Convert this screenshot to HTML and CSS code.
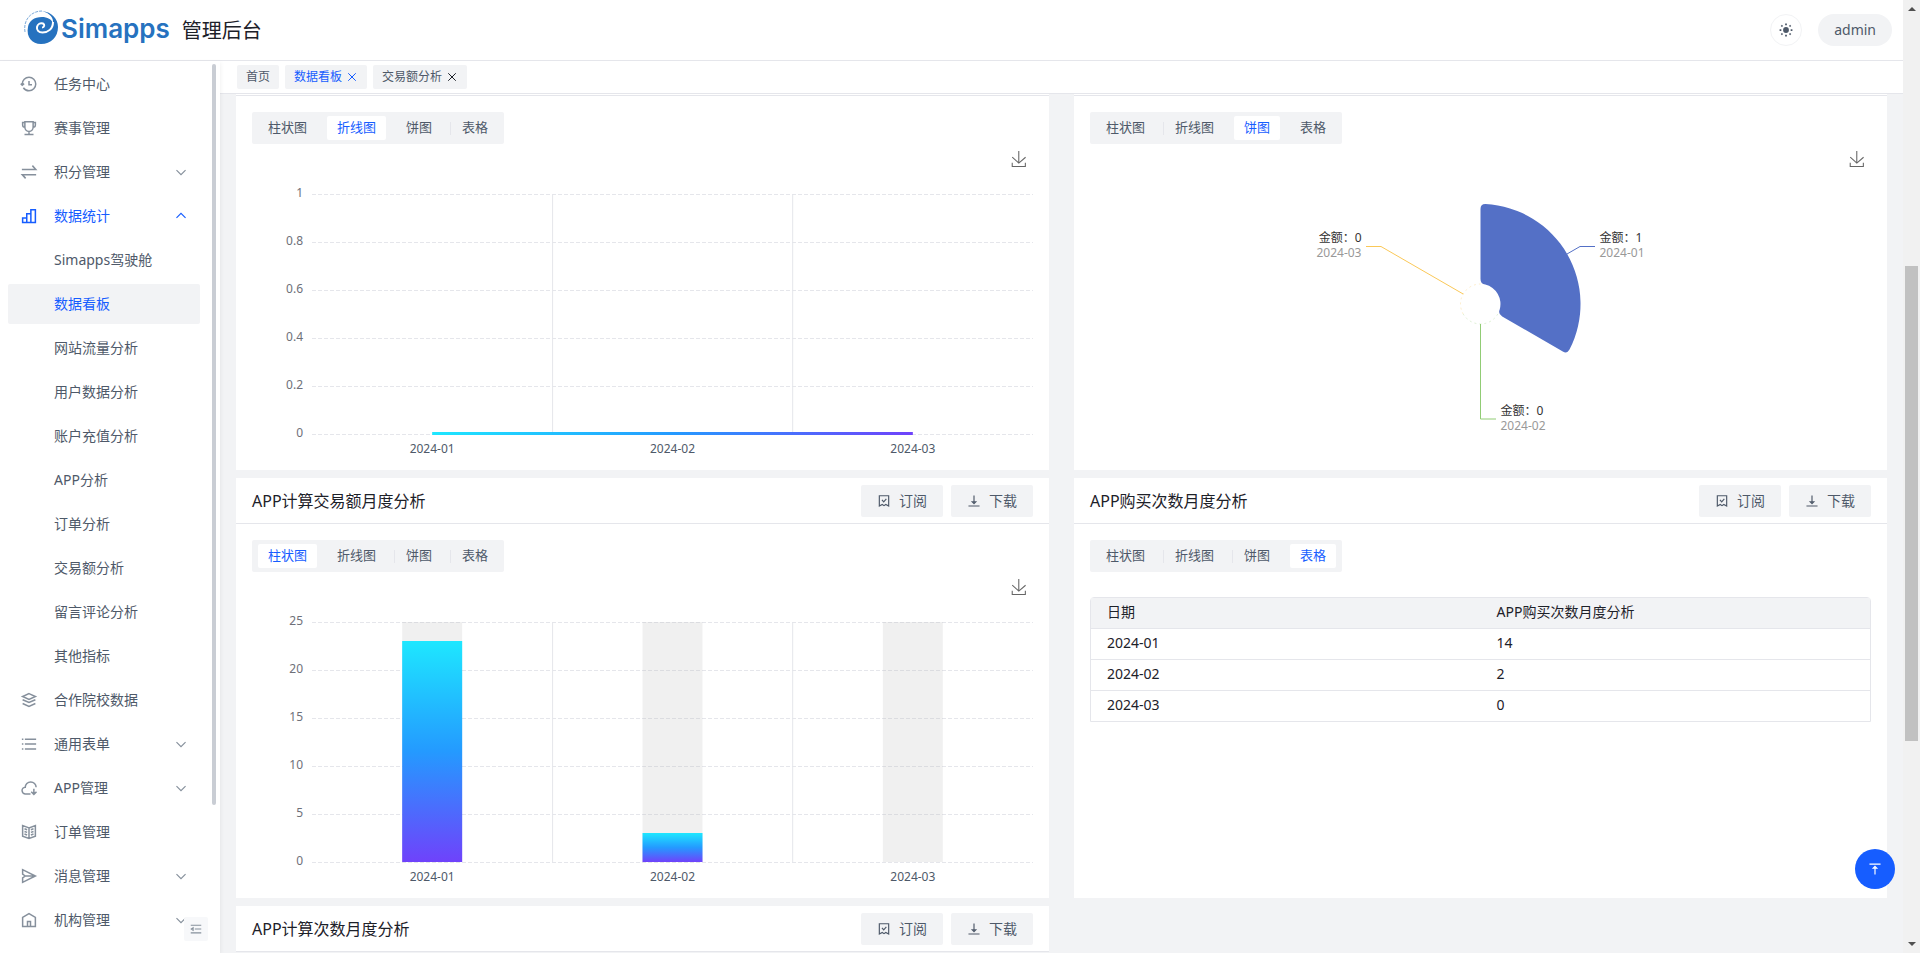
FILE: index.html
```html
<!DOCTYPE html>
<html lang="zh-CN">
<head>
<meta charset="utf-8">
<title>Simapps 管理后台</title>
<link rel="stylesheet" href="styles.css">
</head>
<body>
<svg class="defs" aria-hidden="true">
  <symbol id="i-history" viewBox="0 0 48 48"><path d="M6 24C6 14 14 6 24 6s18 8 18 18-8 18-18 18c-6.300 0-11.800-3.200-15-8M24 16v10h8M2 23l4 4 5-4"/></symbol>
  <symbol id="i-trophy" viewBox="0 0 48 48"><path d="M24 33c-6 0-11-5-11-11V7h22v15c0 6-5 11-11 11Zm0 0v8M13 22c-3.500 0-6-3-6-6V9h6m22 13c3.500 0 6-3 6-6V9h-6M12 41h24"/></symbol>
  <symbol id="i-swap" viewBox="0 0 48 48"><path d="M5 17h37L33 7M43 31H6l9 10"/></symbol>
  <symbol id="i-bars" viewBox="0 0 48 48"><path d="M41 7H29v34h12V7ZM29 18H18v23h11V18ZM18 29H7v12h11V29Z"/></symbol>
  <symbol id="i-layers" viewBox="0 0 48 48"><path d="M24 7 41 14.600 24 22.200 7 14.600 24 7ZM41 23.200 24 30.800 7 23.200M41 33.400 24 41 7 33.400"/></symbol>
  <symbol id="i-list" viewBox="0 0 48 48"><path d="M13 24h30M5 11h4m4 26h30M13 11h30M5 24h4M5 37h4"/></symbol>
  <symbol id="i-cloud" viewBox="0 0 48 48"><path d="M43 22c0-7.700-6.500-14-14.500-14S14 14.300 14 22a9 9 0 0 0 1 18h13m16-6-7 7-7-7m7-8v15"/></symbol>
  <symbol id="i-book" viewBox="0 0 48 48"><path d="M24 13 7 7v28l17 6 17-6V7l-17 6Zm0 0v27.500M29 18l7-2.500M29 25l7-2.500M29 32l7-2.500M19 18l-7-2.500M19 25l-7-2.500M19 32l-7-2.500"/></symbol>
  <symbol id="i-send" viewBox="0 0 48 48"><path d="m14 24-7-5V7l34 17L7 41V29l7-5Zm0 0h25"/></symbol>
  <symbol id="i-home" viewBox="0 0 48 48"><path d="M7 17 24 7l17 10v24H7V17ZM20 41V28h8v13"/></symbol>
  <symbol id="i-down" viewBox="0 0 48 48"><path d="M39.600 17.400 24 33 8.500 17.400"/></symbol>
  <symbol id="i-up" viewBox="0 0 48 48"><path d="M39.600 30.600 24 15 8.500 30.600"/></symbol>
  <symbol id="i-close" viewBox="0 0 48 48"><path d="m9 9 30 30M39 9 9 39"/></symbol>
  <symbol id="i-fold" viewBox="0 0 48 48"><path d="M42 11H6M42 24H20M42 37H6M14 28l-6-4 6-4v8Z"/></symbol>
  <symbol id="i-mark" viewBox="0 0 48 48"><path d="M8 6h32v35l-10-5-6 4-6-4-10 5V6Zm9 14 6 7 9-10"/></symbol>
  <symbol id="i-bottom" viewBox="0 0 48 48"><path d="M5 41h38M24 5v23M24 33l-6-6h12l-6 6Z"/></symbol>
  <symbol id="i-top" viewBox="0 0 48 48"><path d="M43 7H5M24 20v23M24 15l6 6H18l6-6Z"/></symbol>
  <symbol id="i-save" viewBox="0 0 60 60"><path d="M4.700 22.900 29.300 45.500 54.700 23.400M4.600 43.600V58h49.200V43.600M29.200 45.100V0"/></symbol>
  <linearGradient id="g-bar" x1="0" y1="0" x2="0" y2="1"><stop offset="0" stop-color="#1ee7ff"/><stop offset=".5" stop-color="#249aff"/><stop offset="1" stop-color="#6f42fb"/></linearGradient>
  <linearGradient id="g-line"><stop offset="0" stop-color="#1ee7ff"/><stop offset=".5" stop-color="#249aff"/><stop offset="1" stop-color="#6f42fb"/></linearGradient>
</svg>

<div class="page">
  <header class="topbar">
    <div class="brand">
      <svg class="logo" viewBox="0 0 34 34" aria-hidden="true">
        <path class="ring" d="M1 22C-1 10 7 1 18 1"/>
        <path class="wave" d="M4 17C2 27 8 34 17 34c10 0 17-7 17-17C34 9 28 2 18 1c8 2 12 7 11 13-1-5-6-7-11-7C10 7 5 11 4 17Z"/>
        <path class="curl" d="M29 12c0 7-5 10.500-10.500 10.500-4 0-6-2.500-5.500-5.500s3.500-4.500 6-3.500c2 1 1.500 4-1 4"/>
      </svg>
      <span class="brand-name">Simapps</span>
      <h1 class="brand-title">管理后台</h1>
    </div>
    <div class="top-actions">
      <button class="theme" type="button" aria-label="theme">
        <svg viewBox="0 0 48 48"><circle cx="24" cy="24" r="10"/><path d="M21 2h6v6h-6zM21 40h6v6h-6zM2 21h6v6H2zM40 21h6v6h-6zM6 10l4-4 4 4-4 4zM34 10l4-4 4 4-4 4zM6 38l4-4 4 4-4 4zM34 38l4-4 4 4-4 4z"/></svg>
      </button>
      <button class="user" type="button">admin</button>
    </div>
  </header>

  <div class="layout">
    <aside class="side">
      <nav class="menu">
        <a class="item" href="#"><svg class="ic"><use href="#i-history"/></svg><span>任务中心</span></a>
        <a class="item" href="#"><svg class="ic"><use href="#i-trophy"/></svg><span>赛事管理</span></a>
        <a class="item" href="#"><svg class="ic"><use href="#i-swap"/></svg><span>积分管理</span><svg class="arrow"><use href="#i-down"/></svg></a>
        <a class="item open" href="#"><svg class="ic"><use href="#i-bars"/></svg><span>数据统计</span><svg class="arrow"><use href="#i-up"/></svg></a>
        <a class="item sub" href="#">Simapps驾驶舱</a>
        <a class="item sub current" href="#">数据看板</a>
        <a class="item sub" href="#">网站流量分析</a>
        <a class="item sub" href="#">用户数据分析</a>
        <a class="item sub" href="#">账户充值分析</a>
        <a class="item sub" href="#">APP分析</a>
        <a class="item sub" href="#">订单分析</a>
        <a class="item sub" href="#">交易额分析</a>
        <a class="item sub" href="#">留言评论分析</a>
        <a class="item sub" href="#">其他指标</a>
        <a class="item" href="#"><svg class="ic"><use href="#i-layers"/></svg><span>合作院校数据</span></a>
        <a class="item" href="#"><svg class="ic"><use href="#i-list"/></svg><span>通用表单</span><svg class="arrow"><use href="#i-down"/></svg></a>
        <a class="item" href="#"><svg class="ic"><use href="#i-cloud"/></svg><span>APP管理</span><svg class="arrow"><use href="#i-down"/></svg></a>
        <a class="item" href="#"><svg class="ic"><use href="#i-book"/></svg><span>订单管理</span></a>
        <a class="item" href="#"><svg class="ic"><use href="#i-send"/></svg><span>消息管理</span><svg class="arrow"><use href="#i-down"/></svg></a>
        <a class="item" href="#"><svg class="ic"><use href="#i-home"/></svg><span>机构管理</span><svg class="arrow"><use href="#i-down"/></svg></a>
      </nav>
      <div class="side-scroll"></div>
      <button class="fold" type="button" aria-label="fold"><svg><use href="#i-fold"/></svg></button>
    </aside>

    <div class="content">
      <div class="tabs">
        <a class="tab" href="#">首页</a>
        <a class="tab active" href="#">数据看板<svg><use href="#i-close"/></svg></a>
        <a class="tab" href="#">交易额分析<svg class="dark"><use href="#i-close"/></svg></a>
      </div>

      <main class="board">
        <section class="card cut">
          <div class="body">
            <div class="switch">
              <label><input type="radio" name="a">柱状图</label>
              <label><input type="radio" name="a" checked>折线图</label>
              <label><input type="radio" name="a">饼图</label>
              <label><input type="radio" name="a">表格</label>
            </div>
            <div class="tools"><button type="button" class="save" aria-label="save"><svg><use href="#i-save"/></svg></button></div>
            <svg class="chart">
              <g class="grid">
                <line x1="0" x2="100%" y1="0.5" y2="0.5"/><line x1="0" x2="100%" y1="48.5" y2="48.5"/><line x1="0" x2="100%" y1="96.5" y2="96.5"/><line x1="0" x2="100%" y1="144.5" y2="144.5"/><line x1="0" x2="100%" y1="192.5" y2="192.5"/><line x1="0" x2="100%" y1="240.5" y2="240.5"/>
              </g>
              <g class="split"><rect x="33.300%" y="0" width="1" height="240"/><rect x="66.600%" y="0" width="1" height="240"/></g>
              <rect x="16.667%" y="238" width="66.667%" height="3" fill="url(#g-line)"/>
              <g class="y"><text x="-9" y="3">1</text><text x="-9" y="51">0.8</text><text x="-9" y="99">0.6</text><text x="-9" y="147">0.4</text><text x="-9" y="195">0.2</text><text x="-9" y="243">0</text></g>
              <g class="x"><text x="16.667%" y="259">2024-01</text><text x="50%" y="259">2024-02</text><text x="83.333%" y="259">2024-03</text></g>
            </svg>
          </div>
        </section>

        <section class="card cut">
          <div class="body">
            <div class="switch">
              <label><input type="radio" name="b">柱状图</label>
              <label><input type="radio" name="b">折线图</label>
              <label><input type="radio" name="b" checked>饼图</label>
              <label><input type="radio" name="b">表格</label>
            </div>
            <div class="tools"><button type="button" class="save" aria-label="save"><svg><use href="#i-save"/></svg></button></div>
            <svg class="pie">
              <svg class="pie-origin" x="50%" y="137">
                <path fill="#5470c6" d="M0-25V-95Q0-100 5-99.900A100 100 0 0 1 89 45.600Q86.600 50 82.300 47.500L21.700 12.500Q17.300 10 19.200 5.500A20 20 0 0 0 4.800-19.400Q0-20 0-25Z"/>
                <path class="rim" stroke="#91cc75" d="M17.300 10A20 20 0 0 1-17.300 10"/>
                <path class="rim" stroke="#fac858" d="M-17.300 10A20 20 0 0 1 0-20"/>
                <path class="lead" stroke="#5470c6" d="M86.500-50 99.500-57.500H114.500"/>
                <path class="lead" stroke="#91cc75" d="M0 20V115H15.500"/>
                <path class="lead" stroke="#fac858" d="M-17.300-10-99.500-57.500H-114.500"/>
                <text class="name" x="119" y="-62">金额：1</text><text class="date" x="119" y="-47">2024-01</text>
                <text class="name" x="20" y="111">金额：0</text><text class="date" x="20" y="126">2024-02</text>
                <text class="name end" x="-119" y="-62">金额：0</text><text class="date end" x="-119" y="-47">2024-03</text>
              </svg>
            </svg>
          </div>
        </section>

        <section class="card">
          <header class="head"><h2>APP计算交易额月度分析</h2>
            <button class="btn" type="button"><svg><use href="#i-mark"/></svg>订阅</button>
            <button class="btn" type="button"><svg><use href="#i-bottom"/></svg>下载</button>
          </header>
          <div class="body">
            <div class="switch">
              <label><input type="radio" name="c" checked>柱状图</label>
              <label><input type="radio" name="c">折线图</label>
              <label><input type="radio" name="c">饼图</label>
              <label><input type="radio" name="c">表格</label>
            </div>
            <div class="tools"><button type="button" class="save" aria-label="save"><svg><use href="#i-save"/></svg></button></div>
            <svg class="chart">
              <g class="grid">
                <line x1="0" x2="100%" y1="0.5" y2="0.5"/><line x1="0" x2="100%" y1="48.5" y2="48.5"/><line x1="0" x2="100%" y1="96.5" y2="96.5"/><line x1="0" x2="100%" y1="144.5" y2="144.5"/><line x1="0" x2="100%" y1="192.5" y2="192.5"/><line x1="0" x2="100%" y1="240.5" y2="240.5"/>
              </g>
              <g class="split"><rect x="33.300%" y="0" width="1" height="240"/><rect x="66.600%" y="0" width="1" height="240"/></g>
              <g class="bars">
                <rect class="track" x="16.667%" y="0" width="60" height="240"/><rect class="track" x="50%" y="0" width="60" height="240"/><rect class="track" x="83.333%" y="0" width="60" height="240"/>
                <rect fill="url(#g-bar)" x="16.667%" y="19" width="60" height="221"/><rect fill="url(#g-bar)" x="50%" y="211" width="60" height="29"/>
              </g>
              <g class="y"><text x="-9" y="3">25</text><text x="-9" y="51">20</text><text x="-9" y="99">15</text><text x="-9" y="147">10</text><text x="-9" y="195">5</text><text x="-9" y="243">0</text></g>
              <g class="x"><text x="16.667%" y="259">2024-01</text><text x="50%" y="259">2024-02</text><text x="83.333%" y="259">2024-03</text></g>
            </svg>
          </div>
        </section>

        <section class="card">
          <header class="head"><h2>APP购买次数月度分析</h2>
            <button class="btn" type="button"><svg><use href="#i-mark"/></svg>订阅</button>
            <button class="btn" type="button"><svg><use href="#i-bottom"/></svg>下载</button>
          </header>
          <div class="body">
            <div class="switch">
              <label><input type="radio" name="d">柱状图</label>
              <label><input type="radio" name="d">折线图</label>
              <label><input type="radio" name="d">饼图</label>
              <label><input type="radio" name="d" checked>表格</label>
            </div>
            <table class="table">
              <thead><tr><th>日期</th><th>APP购买次数月度分析</th></tr></thead>
              <tbody>
                <tr><td>2024-01</td><td>14</td></tr>
                <tr><td>2024-02</td><td>2</td></tr>
                <tr><td>2024-03</td><td>0</td></tr>
              </tbody>
            </table>
          </div>
        </section>

        <section class="card">
          <header class="head"><h2>APP计算次数月度分析</h2>
            <button class="btn" type="button"><svg><use href="#i-mark"/></svg>订阅</button>
            <button class="btn" type="button"><svg><use href="#i-bottom"/></svg>下载</button>
          </header>
        </section>
      </main>
    </div>
  </div>
</div>

<div class="scrollbar" aria-hidden="true"><i class="up"></i><i class="thumb"></i><i class="down"></i></div>
<button class="backtop" type="button" aria-label="top"><svg><use href="#i-top"/></svg></button>
</body>
</html>
```
FILE: styles.css
```css
* { box-sizing: border-box; }
body {
  margin: 0;
  height: 100vh;
  display: flex;
  overflow: hidden;
  background: #f2f3f5;
  color: #1d2129;
  font: 14px/22px "Noto Sans", "Noto Sans CJK SC", sans-serif;
}
h1, h2 { margin: 0; font-weight: 400; }
button { padding: 0; border: 0; font: inherit; cursor: pointer; }
a { color: inherit; text-decoration: none; }
svg { flex: none; display: block; }
symbol path { fill: none; stroke: currentColor; stroke-width: 4; }
.defs { position: absolute; width: 0; height: 0; }

.page { flex: 1; min-width: 0; display: flex; flex-direction: column; }
.topbar {
  flex: none;
  display: flex;
  justify-content: space-between;
  align-items: center;
  height: 61px;
  padding: 0 11px 0 24px;
  background: #fff;
  border-bottom: 1px solid #e5e6eb;
}
.brand { display: flex; align-items: center; }
.logo { width: 34px; height: 34px; margin: 0 3px 6px 0; }
.ring { fill: none; stroke: #2672bf; stroke-width: 1; stroke-dasharray: 3 1; opacity: .6; }
.wave { fill: #2672bf; }
.curl { fill: none; stroke: #fff; stroke-width: 2; }
.brand-name { margin-bottom: 3px; color: #2672bf; font: 600 26px/32px Inter, sans-serif; }
.brand-title { margin: 2px 0 0 12px; font-size: 20px; line-height: 28px; }
.top-actions { display: flex; gap: 16px; }
.theme {
  display: grid;
  place-items: center;
  width: 32px;
  height: 32px;
  border: 1px solid #f2f3f5;
  border-radius: 50%;
  background: #fff;
}
.theme svg { width: 14px; height: 14px; fill: #4e5969; }
.user { height: 32px; padding: 0 16px; border-radius: 16px; background: #f2f3f5; color: #4e5969; }

.layout { flex: 1; min-height: 0; display: flex; }
.side {
  position: relative;
  z-index: 1;
  flex: none;
  display: flex;
  justify-content: space-between;
  width: 220px;
  padding: 3px 4px 0 8px;
  background: #fff;
  box-shadow: 0 2px 5px rgba(0, 0, 0, .08);
}
.menu { width: 192px; display: flex; flex-direction: column; gap: 4px; }
.item {
  flex: none;
  display: flex;
  align-items: center;
  height: 40px;
  padding: 0 12px;
  border-radius: 2px;
  color: #4e5969;
}
.ic { width: 18px; height: 18px; margin-right: 16px; color: #86909c; }
.arrow { width: 14px; height: 14px; margin-left: auto; color: #86909c; }
.open, .open svg, .current { color: #165dff; }
.sub { padding-left: 46px; }
.current { background: #f2f3f5; }
.side-scroll { width: 4px; height: 83.4%; border-radius: 2px; background: #c9cdd4; }
.fold {
  position: absolute;
  right: 12px;
  bottom: 12px;
  display: grid;
  place-items: center;
  width: 24px;
  height: 24px;
  border-radius: 2px;
  background: #f7f8fa;
  color: #86909c;
}
.fold svg { width: 14px; height: 14px; }

.content { flex: 1; min-width: 0; display: flex; flex-direction: column; }
.tabs {
  flex: none;
  display: flex;
  gap: 6px;
  height: 33px;
  padding: 4px 17px;
  background: #fff;
  border-bottom: 1px solid #e5e6eb;
}
.tab {
  display: flex;
  align-items: center;
  gap: 4px;
  height: 24px;
  padding: 0 9px;
  border-radius: 2px;
  background: #f2f3f5;
  color: #4e5969;
  font-size: 12px;
}
.tab svg { width: 12px; height: 12px; }
.tab .dark { color: #1d2129; }
.tab.active { color: #165dff; }

.board {
  flex: 1;
  min-height: 0;
  overflow: hidden;
  display: grid;
  grid-template-columns: 1fr 1fr;
  align-content: start;
  gap: 8px 25px;
  padding: 0 16px;
}
.card { min-width: 0; background: #fff; }
.cut { padding-top: 1px; }
.cut .body { border-top: 1px solid #e5e6eb; }
.head {
  display: flex;
  align-items: center;
  gap: 8px;
  height: 46px;
  padding: 0 16px;
  border-bottom: 1px solid #e5e6eb;
}
.head h2 { flex: 1; font-size: 16px; line-height: 24px; }
.btn {
  display: flex;
  align-items: center;
  gap: 8px;
  height: 32px;
  padding: 0 16px;
  border-radius: 2px;
  background: #f2f3f5;
  color: #4e5969;
}
.btn svg { width: 14px; height: 14px; }
.body { padding: 16px; }

.switch {
  display: inline-flex;
  gap: 10px;
  padding: 4px 6px;
  border-radius: 2px;
  background: #f2f3f5;
  vertical-align: top;
}
.switch label {
  position: relative;
  height: 24px;
  padding: 0 10px;
  border-radius: 2px;
  color: #4e5969;
  font-size: 13px;
  line-height: 22px;
  cursor: pointer;
}
.switch input { position: absolute; margin: 0; appearance: none; }
.switch label:has(:checked) { background: #fff; color: #165dff; }
.switch label:not(:has(:checked)) + label:not(:has(:checked))::before {
  content: "";
  position: absolute;
  left: -2px;
  top: 6px;
  width: 1px;
  height: 13px;
  background: #e5e6eb;
}

.tools { display: flex; justify-content: flex-end; padding: 7px 6px 0 0; }
.save { background: none; color: #666; }
.save svg { width: 16px; height: 16px; }
.chart {
  width: calc(100% - 60px);
  height: 260px;
  margin: 27px 0 0 60px;
  overflow: visible;
  font-size: 12px;
}
.grid line { stroke: #e5e6eb; stroke-dasharray: 4 2; }
.split { fill: #e5e6eb; }
.y { fill: #6e7079; text-anchor: end; }
.x { fill: #4e5969; text-anchor: middle; }
.bars { transform: translateX(-30px); }
.track { fill: rgba(180, 180, 180, .2); }
.pie { width: 100%; height: 287px; font-size: 12px; }
.pie-origin { overflow: visible; }
.rim { fill: none; stroke-width: 1; stroke-dasharray: 2 3; opacity: .3; }
.lead { fill: none; stroke-width: 1; }
.name { fill: #333; }
.date { fill: #999; }
.end { text-anchor: end; }

.table {
  width: 100%;
  margin-top: 25px;
  table-layout: fixed;
  border: 1px solid #e5e6eb;
  border-radius: 4px 4px 0 0;
  border-spacing: 0;
}
.table th, .table td { height: 31px; padding: 3px 16px 5px; font-weight: 400; text-align: left; border-bottom: 1px solid #e5e6eb; }
.table th { background: #f2f3f5; }
.table tr:last-child td { height: 30px; border-bottom: 0; }

.scrollbar {
  flex: none;
  display: grid;
  grid-template-rows: 4px 255fr 475fr 201fr 4px;
  justify-items: center;
  width: 17px;
  padding: 7px 0;
  background: #f1f1f1;
}
.up, .down { height: 4px; border: 4px solid transparent; }
.up { border-top: 0; border-bottom-color: #505050; }
.down { grid-row: 5; border-bottom: 0; border-top-color: #505050; }
.thumb { grid-row: 3; width: 13px; background: #c1c1c1; }
.backtop {
  position: fixed;
  right: 25px;
  bottom: 64px;
  display: grid;
  place-items: center;
  width: 40px;
  height: 40px;
  border-radius: 50%;
  background: #165dff;
  color: #fff;
}
.backtop svg { width: 14px; height: 14px; }
```
